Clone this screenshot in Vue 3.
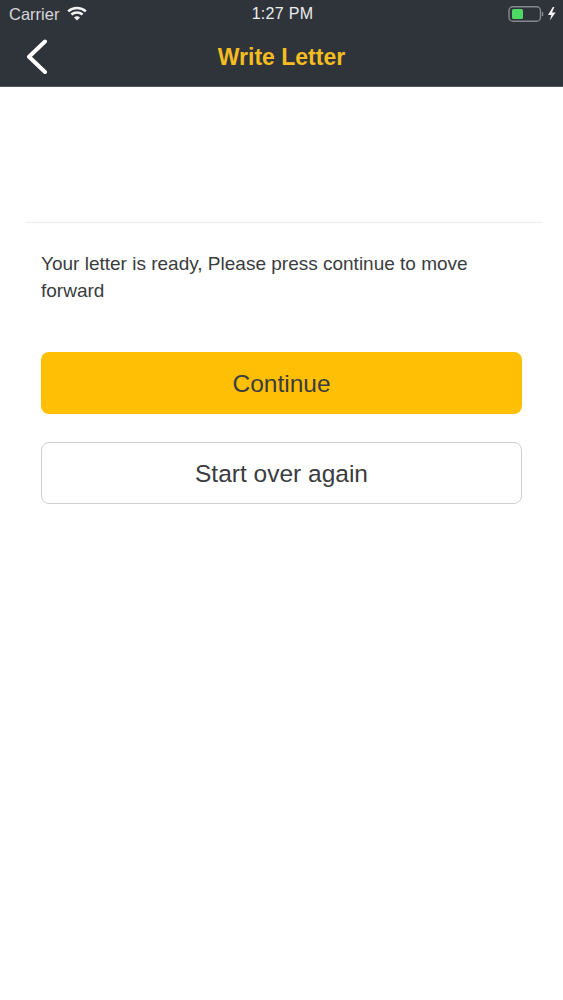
<script setup>
const title = 'Write Letter'
</script>

<template>
  <div class="page">
    <header class="top">
      <div class="status">
        <div class="s-left">
          <span class="carrier">Carrier</span>
          <svg class="wifi" width="20" height="15" viewBox="0 0 20 15">
            <path d="M1.2 5.4 A13 13 0 0 1 18.8 5.4" fill="none" stroke="#f2f2f2" stroke-width="2.6" />
            <path d="M4.4 8.6 A8.5 8.5 0 0 1 15.6 8.6" fill="none" stroke="#f2f2f2" stroke-width="2.6" />
            <path d="M7 11.4 L10 14.6 L13 11.4 A4.2 4.2 0 0 0 7 11.4 Z" fill="#f2f2f2" />
          </svg>
        </div>
        <span class="time">1:27 PM</span>
        <div class="s-right">
          <svg width="48" height="16" viewBox="0 0 48 16">
            <rect x="1" y="0.8" width="31.5" height="14.4" rx="3.8" fill="none" stroke="#85888c" stroke-width="1.4" />
            <rect x="4" y="3" width="11" height="10" rx="1.5" fill="#4cd964" />
            <rect x="33.8" y="6" width="1.4" height="4" fill="#85888c" />
            <path d="M44.8 1 L40 9 L43.4 9 L41.8 14.5 L47.6 6.4 L44 6.4 L46.4 1 Z" fill="#f5f5f5" />
          </svg>
        </div>
      </div>
      <nav class="nav">
        <svg class="back" width="24" height="36" viewBox="0 0 24 36">
          <path d="M20 2.5 L4 17.8 L20 33" fill="none" stroke="#fff" stroke-width="4" stroke-linecap="round" stroke-linejoin="round" />
        </svg>
        <h1 class="title">{{ title }}</h1>
      </nav>
    </header>

    <main class="content">
      <div class="spacer"></div>
      <p class="msg">Your letter is ready, Please press continue to move forward</p>
      <button class="btn primary">Continue</button>
      <button class="btn outline">Start over again</button>
    </main>
  </div>
</template>

<style scoped>
.page {
  width: 563px;
  height: 1000px;
  background: #fff;
  font-family: "Liberation Sans", Arial, sans-serif;
  overflow: hidden;
}
.top {
  height: 87px;
  box-sizing: border-box;
  background: #2f343b;
  border-bottom: 1px solid #55585c;
}
.status {
  height: 28px;
  display: grid;
  grid-template-columns: 1fr auto 1fr;
  align-items: center;
  padding: 0 7px 0 9px;
}
.s-left {
  display: flex;
  align-items: center;
  gap: 8px;
}
.carrier {
  color: #d6d7d9;
  font-size: 16.5px;
}
.wifi {
  margin-top: -1px;
}
.time {
  color: #eceded;
  font-size: 16px;
  letter-spacing: 0.3px;
}
.s-right {
  display: flex;
  justify-content: flex-end;
}
.nav {
  height: 58px;
  display: flex;
  align-items: center;
  justify-content: center;
  position: relative;
}
.back {
  position: absolute;
  left: 25px;
  top: 11px;
}
.title {
  margin: 0;
  color: #f5bd1f;
  font-size: 23px;
  font-weight: 700;
}
.content {
  padding: 0 41px;
  display: flex;
  flex-direction: column;
}
.spacer {
  height: 135px;
  margin: 0 -21px 0 -16px;
  border-bottom: 1px solid #ececec;
}
.msg {
  margin: 27px 0 0;
  color: #3a3c40;
  font-size: 19px;
  line-height: 27px;
}
.btn {
  width: 481px;
  box-sizing: border-box;
  border-radius: 8px;
  font-family: inherit;
  font-size: 24.5px;
  color: #3a3c40;
  padding: 2px 0 0;
}
.primary {
  height: 62px;
  margin-top: 48px;
  background: #ffbf05;
  border: none;
}
.outline {
  height: 62px;
  margin-top: 28px;
  background: #fff;
  border: 1px solid #cfcfcf;
}
</style>
